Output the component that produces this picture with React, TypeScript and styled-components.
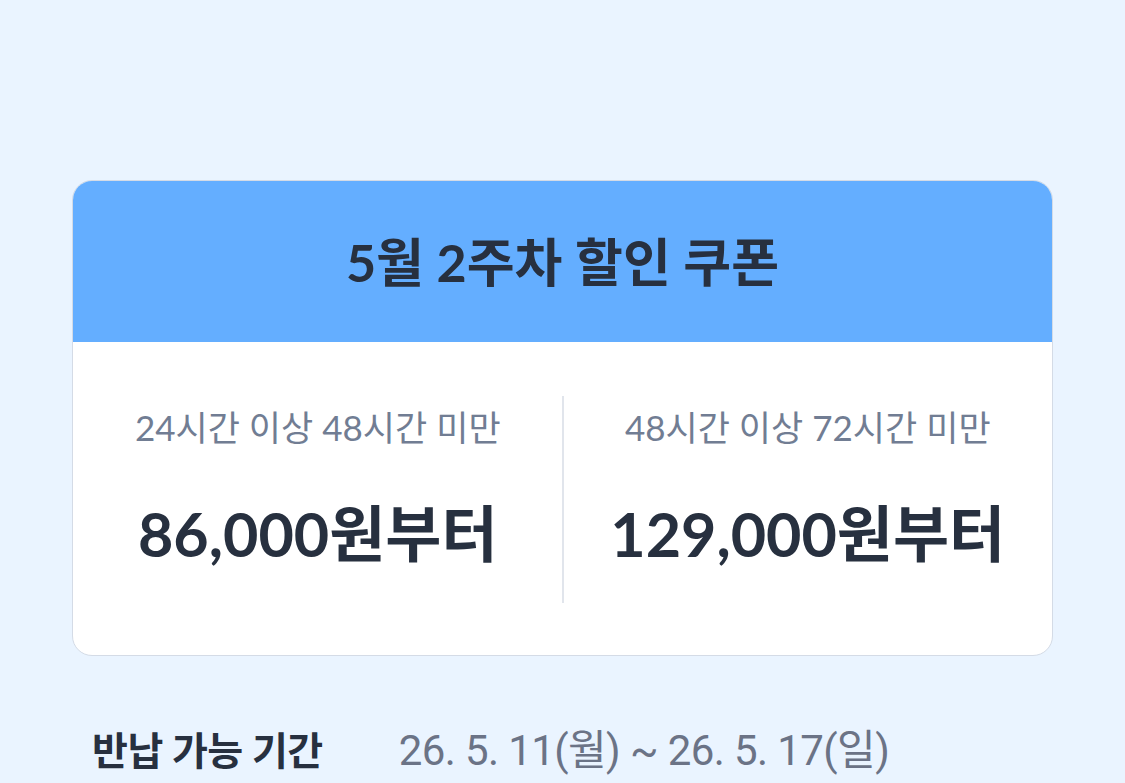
import styled, { createGlobalStyle } from 'styled-components';

const GlobalStyle = createGlobalStyle`
  html, body {
    margin: 0;
    padding: 0;
    background: #eaf4ff;
  }
  body {
    font-family: Lato, 'Noto Sans CJK KR', sans-serif;
  }
`;

const coupons = [
  { range: '24시간 이상 48시간 미만', price: '86,000원부터' },
  { range: '48시간 이상 72시간 미만', price: '129,000원부터' },
];

export default function App() {
  return (
    <Page>
      <GlobalStyle />
      <Card>
        <CardHeader>
          <Title>5월 2주차 할인 쿠폰</Title>
        </CardHeader>
        <CardBody>
          {coupons.map((c, i) => (
            <Column key={c.range} $divider={i > 0}>
              <Range>{c.range}</Range>
              <Price>{c.price}</Price>
            </Column>
          ))}
        </CardBody>
      </Card>
      <PeriodRow>
        <PeriodLabel>반납 가능 기간</PeriodLabel>
        <PeriodValue>26. 5. 11(월) ~ 26. 5. 17(일)</PeriodValue>
      </PeriodRow>
    </Page>
  );
}

const Page = styled.div`
  width: 1125px;
  height: 783px;
  overflow: hidden;
  box-sizing: border-box;
  padding: 180px 72px 0;
  background: #eaf4ff;
`;

const Card = styled.div`
  width: 981px;
  border: 1px solid #d4dbe6;
  border-radius: 20px;
  overflow: hidden;
  background: #fff;
  box-sizing: border-box;
`;

const CardHeader = styled.div`
  height: 161px;
  background: #64aeff;
  display: flex;
  align-items: center;
  justify-content: center;
`;

const Title = styled.h2`
  margin: 0;
  font-size: 52px;
  line-height: 1;
  font-weight: 700;
  color: #27303f;
`;

const CardBody = styled.div`
  display: grid;
  grid-template-columns: 1fr 1fr;
  padding: 54px 0 52px;
`;

const Column = styled.div<{ $divider?: boolean }>`
  display: flex;
  flex-direction: column;
  align-items: center;
  height: 207px;
  box-sizing: border-box;
  padding-top: 12px;
  border-left: ${(p) => (p.$divider ? '2px solid #e1e5ec' : 'none')};
  margin-left: ${(p) => (p.$divider ? '-1px' : '0')};
`;

const Range = styled.div`
  font-size: 35px;
  line-height: 38px;
  color: #717d93;
  font-weight: 400;
`;

const Price = styled.div`
  margin-top: 55px;
  font-size: 61px;
  line-height: 66px;
  font-weight: 700;
  color: #27303f;
`;

const PeriodRow = styled.div`
  display: flex;
  align-items: baseline;
  margin-top: 72px;
  padding-left: 20px;
  gap: 76px;
`;

const PeriodLabel = styled.div`
  font-family: Roboto, 'Noto Sans CJK KR', sans-serif;
  font-size: 39px;
  line-height: 46px;
  font-weight: 700;
  color: #27303f;
  letter-spacing: -0.5px;
`;

const PeriodValue = styled.div`
  font-family: Roboto, 'Noto Sans CJK KR', sans-serif;
  font-size: 42px;
  line-height: 46px;
  color: #6b7386;
  letter-spacing: -0.6px;
`;
